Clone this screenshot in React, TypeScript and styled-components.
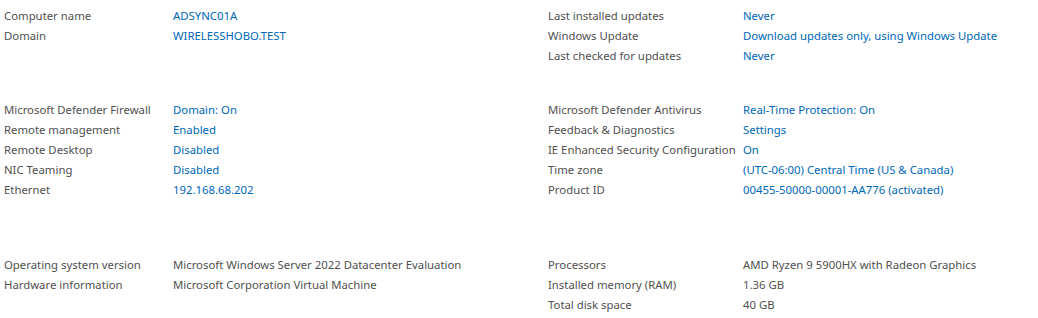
import React from 'react';
import styled, { createGlobalStyle } from 'styled-components';

const GlobalStyle = createGlobalStyle`
  html, body {
    margin: 0;
    padding: 0;
    background: #ffffff;
  }
  body {
    font-family: "Noto Sans", "Open Sans", sans-serif;
    font-size: 11.35px;
  }
`;

const Page = styled.div`
  width: 1038px;
  height: 318px;
  padding: 5px 0 0 4px;
  box-sizing: border-box;
  overflow: hidden;
`;

const Section = styled.div<{ gap: number }>`
  display: grid;
  grid-template-columns: 544px 1fr;
  margin-bottom: ${props => props.gap}px;
`;

const Panel = styled.div<{ labelWidth: number }>`
  display: grid;
  grid-template-columns: ${props => props.labelWidth}px 1fr;
  grid-auto-rows: 20px;
  align-items: center;
`;

const Label = styled.div`
  color: #505050;
  white-space: nowrap;
`;

const Value = styled.div<{ link?: boolean }>`
  color: ${props => (props.link ? '#0067b8' : '#505050')};
  white-space: nowrap;
  cursor: ${props => (props.link ? 'pointer' : 'default')};
`;

type Row = [string, string];

interface SectionData {
  gap: number;
  link: boolean;
  left: Row[];
  right: Row[];
}

const sections: SectionData[] = [
  {
    gap: 34,
    link: true,
    left: [
      ['Computer name', 'ADSYNC01A'],
      ['Domain', 'WIRELESSHOBO.TEST'],
    ],
    right: [
      ['Last installed updates', 'Never'],
      ['Windows Update', 'Download updates only, using Windows Update'],
      ['Last checked for updates', 'Never'],
    ],
  },
  {
    gap: 55,
    link: true,
    left: [
      ['Microsoft Defender Firewall', 'Domain: On'],
      ['Remote management', 'Enabled'],
      ['Remote Desktop', 'Disabled'],
      ['NIC Teaming', 'Disabled'],
      ['Ethernet', '192.168.68.202'],
    ],
    right: [
      ['Microsoft Defender Antivirus', 'Real-Time Protection: On'],
      ['Feedback & Diagnostics', 'Settings'],
      ['IE Enhanced Security Configuration', 'On'],
      ['Time zone', '(UTC-06:00) Central Time (US & Canada)'],
      ['Product ID', '00455-50000-00001-AA776 (activated)'],
    ],
  },
  {
    gap: 0,
    link: false,
    left: [
      ['Operating system version', 'Microsoft Windows Server 2022 Datacenter Evaluation'],
      ['Hardware information', 'Microsoft Corporation Virtual Machine'],
    ],
    right: [
      ['Processors', 'AMD Ryzen 9 5900HX with Radeon Graphics'],
      ['Installed memory (RAM)', '1.36 GB'],
      ['Total disk space', '40 GB'],
    ],
  },
];

const renderRows = (rows: Row[], link: boolean) =>
  rows.map(([label, value]) => (
    <React.Fragment key={label}>
      <Label>{label}</Label>
      <Value link={link}>{value}</Value>
    </React.Fragment>
  ));

const App: React.FC = () => {
  return (
    <>
      <GlobalStyle />
      <Page>
        {sections.map((s, i) => (
          <Section key={i} gap={s.gap}>
            <Panel labelWidth={169}>{renderRows(s.left, s.link)}</Panel>
            <Panel labelWidth={195}>{renderRows(s.right, s.link)}</Panel>
          </Section>
        ))}
      </Page>
    </>
  );
};

export default App;
